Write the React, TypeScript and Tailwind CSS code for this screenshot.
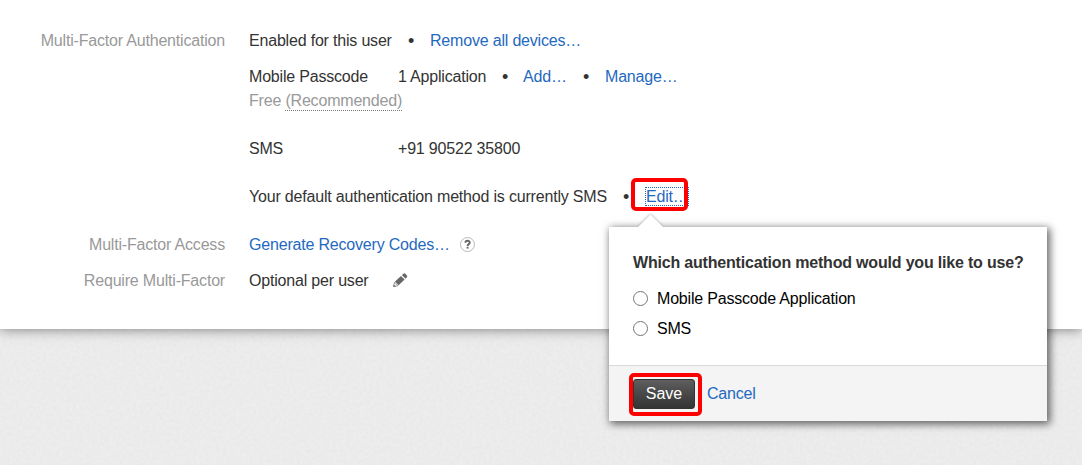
import React from "react";

type Kids = { children: React.ReactNode };

function Row({ label, className = "", children }: Kids & { label?: string; className?: string }) {
  return (
    <div className={`flex h-6 ${className}`}>
      <div className="w-[225px] shrink-0 text-right text-[#999]">{label}</div>
      <div className="ml-6 flex">{children}</div>
    </div>
  );
}

function Link({ className = "", children }: Kids & { className?: string }) {
  return (
    <a href="#" className={`text-[#1f69c0] ${className}`}>
      {children}
    </a>
  );
}

function Bullet({ className = "" }: { className?: string }) {
  return <span className={`w-[6px] text-[18px] ${className}`}>•</span>;
}

function HelpIcon() {
  return (
    <svg className="mt-1 size-[15px]" viewBox="0 0 15 15" fill="none">
      <circle cx="7.5" cy="7.5" r="7" stroke="#b8b8b8" />
      <path d="M5.4 5.8C5.4 3.1 9.8 3 9.8 5.6C9.8 7.2 7.6 7.1 7.6 8.9" stroke="#666" strokeWidth="1.9" />
      <path d="M6.6 9.8h2v1.8h-2z" fill="#666" />
    </svg>
  );
}

function PencilIcon() {
  return (
    <svg className="ml-6 mt-1 h-[15px] w-[15px]" viewBox="0 0 15 15">
      <path d="M8.9 2L10.8.5Q11.5 0 12.1.6L14.1 2.8Q14.6 3.5 14 4.1L12.5 5.7z" fill="#666" />
      <path d="M8 2.9L11.6 6.6L5.6 12.3L2 8.6z" fill="#666" />
      <path d="M1.6 9.2L.5 13.6L5 12.7z" fill="#fff" stroke="#888" strokeWidth=".9" />
      <path d="M.2 14.1l.6-2.6 2.1 2z" fill="#777" />
    </svg>
  );
}

function Choice({ label }: { label: string }) {
  return (
    <label className="flex h-[30px] items-center text-black">
      <input
        type="radio"
        name="method"
        className="mb-[2px] mr-[9px] size-[15px] appearance-none rounded-full border border-[#767676] bg-white"
      />
      {label}
    </label>
  );
}

function MethodDialog() {
  return (
    <div className="absolute left-[609px] top-[227px] h-[194px] w-[438px] bg-white shadow-[2px_2px_8px_1px_rgba(0,0,0,0.6)]">
      <svg className="absolute left-[25px] top-[-18px] h-[18px] w-[34px]" viewBox="0 0 34 18">
        <defs>
          <filter id="tip" x="-30%" y="-30%" width="160%" height="160%">
            <feGaussianBlur stdDeviation="1.6" />
          </filter>
        </defs>
        <path d="M4 18L16.5 5.5L29 18" fill="#999" filter="url(#tip)" />
        <path d="M4 18L16 6H17L29 18z" fill="#fff" />
      </svg>
      <div className="flex h-[138px] flex-col px-6 pt-6">
        <h2 className="h-[33px] font-bold leading-6">Which authentication method would you like to use?</h2>
        <Choice label="Mobile Passcode Application" />
        <Choice label="SMS" />
      </div>
      <div className="flex h-[56px] items-start border-t border-[#d9d9d9] bg-[#f4f4f4] pl-5 pt-[7px]">
        <div className="flex h-[43px] w-[73px] items-start rounded-[5px] border-4 border-[#fe0000]">
          <button className="mt-[2px] h-[30px] w-[62px] rounded-[3px] border border-[#333] bg-linear-to-b from-[#5e5e5e] to-[#343434] tracking-normal text-white">
            Save
          </button>
        </div>
        <Link className="ml-[5px] mt-[9px]">Cancel</Link>
      </div>
    </div>
  );
}

export default function App() {
  return (
    <div className="relative h-[465px] w-[1082px] overflow-hidden whitespace-nowrap bg-[#ededed] font-['Liberation_Sans',Arial,sans-serif] text-base leading-6 tracking-[-0.19px] text-[#333]">
      <svg className="absolute inset-0 size-full" aria-hidden="true">
        <filter id="paper">
          <feTurbulence type="fractalNoise" baseFrequency="0.3" numOctaves="3" seed="4" />
          <feColorMatrix values="0 0 0 0 0.4  0 0 0 0 0.4  0 0 0 0 0.4  0.13 0 0 0 -0.04" />
        </filter>
        <rect width="100%" height="100%" filter="url(#paper)" />
      </svg>

      <main className="relative h-[329px] bg-white pt-[29px] shadow-[0_0_12px_rgba(0,0,0,0.5)]">
        <Row label="Multi-Factor Authentication">
          <span className="w-[143px]">Enabled for this user</span>
          <Bullet className="ml-4" />
          <Link className="ml-4">Remove all devices…</Link>
        </Row>
        <Row className="mt-3">
          <span className="w-[149px]">Mobile Passcode</span>
          <span className="w-[88px]">1 Application</span>
          <Bullet className="ml-4" />
          <Link className="ml-[15px] w-[43px]">Add…</Link>
          <Bullet className="ml-[17px]" />
          <Link className="ml-4">Manage…</Link>
        </Row>
        <Row>
          <span className="text-[#999]">
            Free <span className="inline-block h-[22px] border-b border-dotted border-[#777]">(Recommended)</span>
          </span>
        </Row>
        <Row className="mt-6">
          <span className="w-[149px]">SMS</span>
          <span>+91 90522 35800</span>
        </Row>
        <Row className="mt-6">
          <span className="w-[358px]">Your default authentication method is currently SMS</span>
          <Bullet className="ml-4" />
          <span className="relative ml-4">
            <Link className="mt-[2px] block h-[19px] w-11 border border-dotted border-[#1f69c0] leading-[18px]">
              Edit…
            </Link>
            <span className="absolute left-[-14px] top-[-7px] h-[33px] w-[57px] rounded-[5px] border-4 border-[#fe0000]" />
          </span>
        </Row>
        <Row label="Multi-Factor Access" className="mt-6">
          <Link className="w-[211px]">Generate Recovery Codes…</Link>
          <HelpIcon />
        </Row>
        <Row label="Require Multi-Factor" className="mt-3">
          <span className="w-[120px]">Optional per user</span>
          <PencilIcon />
        </Row>
      </main>
      <MethodDialog />
    </div>
  );
}
